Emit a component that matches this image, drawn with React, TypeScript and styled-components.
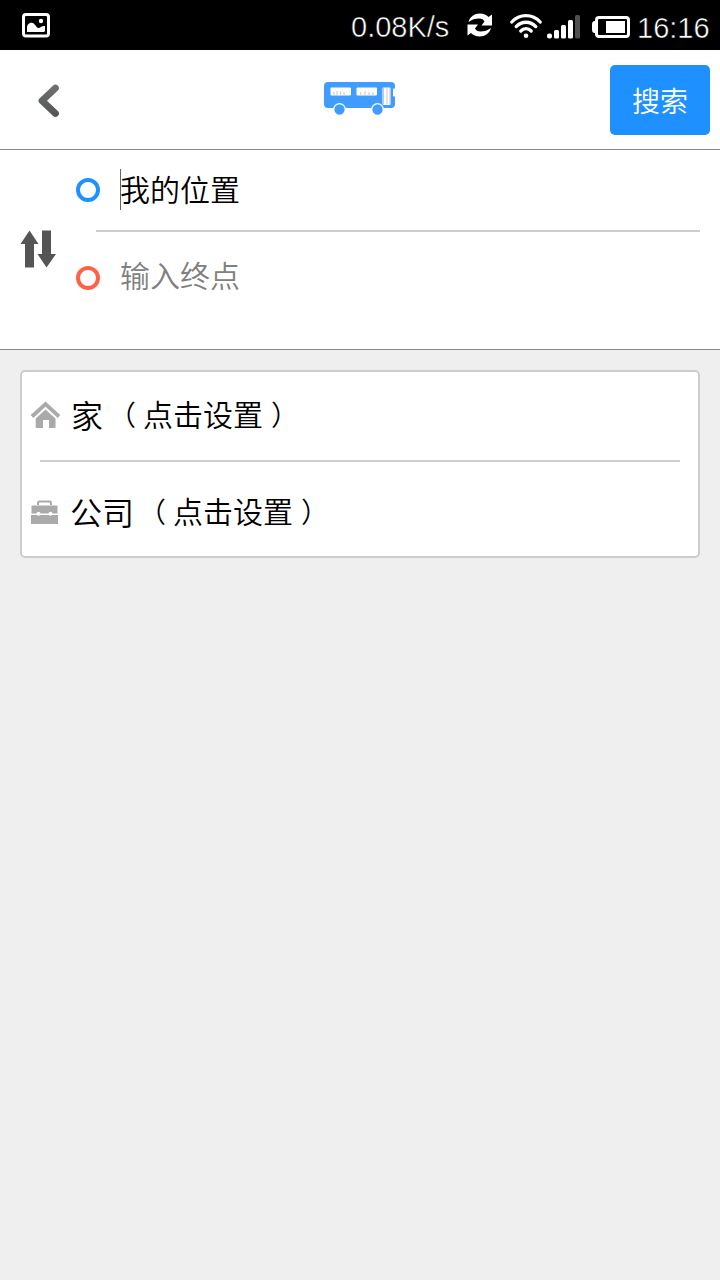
import React from "react";
import styled, { createGlobalStyle } from "styled-components";

const GlobalStyle = createGlobalStyle`
  * { box-sizing: border-box; }
  body { margin: 0; background: #efefef; }
`;

const Screen = styled.main`
  width: 720px;
  height: 1280px;
  overflow: hidden;
  background: #efefef;
  color: #000;
  font-family: "Noto Sans CJK SC", sans-serif;
  font-weight: 350;
`;

const StatusBar = styled.header`
  display: flex;
  align-items: center;
  height: 50px;
  padding: 0 12px 0 22px;
  background: #000;
  svg { flex: none; display: block; }
`;

const StatusText = styled.span<{ $width: number; $top?: number }>`
  width: ${(p) => p.$width}px;
  flex: none;
  padding-top: ${(p) => p.$top ?? 4}px;
  color: #fff;
  font: 400 29px/46px "Liberation Sans", sans-serif;
  white-space: nowrap;
  -webkit-text-stroke: 0.5px #000;
`;

const StatusRight = styled.div`
  display: flex;
  align-items: center;
  margin-left: auto;
`;

const Indicators = styled.div`
  display: flex;
  align-items: center;
  padding-top: 3px;
`;

const Gap = styled.div<{ $w: number }>`
  width: ${(p) => p.$w}px;
  flex: none;
`;

const NavBar = styled.nav`
  display: flex;
  align-items: center;
  justify-content: space-between;
  height: 100px;
  padding: 0 10px 0 36px;
  background: #fff;
  border-bottom: 1px solid #888;
`;

const PlainButton = styled.button`
  display: block;
  padding: 0;
  border: 0;
  background: none;
  svg { display: block; }
`;

const BackButton = styled(PlainButton)`
  width: 100px;
  padding-top: 2px;
`;

const BusTab = styled.div`
  width: 76px;
  margin-left: -4px;
  margin-bottom: 4px;
  svg { display: block; }
`;

const SearchButton = styled(PlainButton)`
  width: 100px;
  height: 70px;
  margin-left: 26px;
  margin-top: 1px;
  border-radius: 5px;
  background: #1e90ff;
  color: #fff;
  font: 350 28px/70px "Noto Sans CJK SC", sans-serif;
`;

const RouteForm = styled.section`
  display: flex;
  height: 200px;
  background: #fff;
  border-bottom: 1px solid #888;
`;

const SwapButton = styled(PlainButton)`
  width: 76px;
  padding: 0 0 2px 20px;
`;

const Fields = styled.div`
  flex: 1;
  padding-right: 20px;
`;

const Field = styled.div<{ $height: number }>`
  display: flex;
  align-items: center;
  height: ${(p) => p.$height}px;
`;

const Ring = styled.span<{ $color: string }>`
  width: 24px;
  height: 24px;
  margin-right: 20px;
  border: 4px solid ${(p) => p.$color};
  border-radius: 50%;
`;

const Caret = styled.span`
  width: 1px;
  height: 41px;
  margin: 0 -1px 2px 0;
  background: #666;
`;

const FieldText = styled.span<{ $muted?: boolean }>`
  margin-bottom: ${(p) => (p.$muted ? 8 : 4)}px;
  color: ${(p) => (p.$muted ? "#808080" : "#000")};
  font-size: 30px;
  line-height: 40px;
`;

const Divider = styled.div<{ $left: number; $right?: number }>`
  height: 2px;
  margin-left: ${(p) => p.$left}px;
  margin-right: ${(p) => p.$right ?? 0}px;
  background: #cdcdcd;
`;

const Card = styled.section`
  height: 188px;
  margin: 20px;
  background: #fff;
  border: 2px solid #cdcdcd;
  border-radius: 5px;
`;

const PlaceRow = styled.div<{ $height: number }>`
  display: flex;
  align-items: center;
  height: ${(p) => p.$height}px;
  padding-left: 8px;
  white-space: nowrap;
  svg { display: block; flex: none; margin: 0 10px 2px 0; }
`;

const PlaceName = styled.span<{ $gap: number }>`
  margin-right: ${(p) => p.$gap}px;
  margin-bottom: 4px;
  font-size: 32px;
  line-height: 44px;
`;

const PlaceHint = styled.span`
  margin-bottom: 5px;
  font-size: 30px;
  line-height: 44px;
`;

const Paren = styled.span<{ $shift: number }>`
  margin-left: ${(p) => p.$shift}px;
  margin-right: ${(p) => 2 - p.$shift}px;
  font-size: 28px;
`;

const PictureIcon = () => (
  <svg width="28" height="25" viewBox="0 0 28 25">
    <rect x="1.500" y="1.500" width="25" height="21.500" rx="2.500" fill="none" stroke="#fff" strokeWidth="3" />
    <path d="M5 19v-4.500C5 12 7 9.800 9.500 9.800c3.500 0 4.500 5.200 7 5.200 2 0 3-2.500 6.500-2V17.500Q23 19 21.500 19z" fill="#fff" />
    <circle cx="19" cy="8" r="2.200" fill="#fff" />
  </svg>
);

const SyncIcon = () => (
  <svg width="26" height="24" viewBox="0 0 26 24">
    <path d="M1.500 9C3 3.500 7.500.5 13 .5c3.500 0 6.500 1.300 8.500 3.500L25 1.500v11H14.500l3-4C16.500 6.800 15 5.500 12 5.500 8 5.500 5 6.500 1.500 9z" fill="#fff" />
    <path d="M24 15c-1.500 5.500-6 8.500-11.500 8.500-3.500 0-6.500-1.300-8.500-3.500L.5 22.500v-11H11l-3 4c1 1.700 2.500 3 5.500 3 4 0 7-1 10.500-3.500z" fill="#fff" />
  </svg>
);

const WifiIcon = () => (
  <svg width="32" height="25" viewBox="0 0 32 25" fill="none" stroke="#fff" strokeWidth="3.300" strokeLinecap="round">
    <path d="M1.800 8C9.500-.4 22.500-.4 30.200 8" />
    <path d="M6.200 12.600c5.500-5.800 14.100-5.800 19.600 0" />
    <path d="M10.800 17c3-3.100 7.400-3.100 10.400 0" />
    <circle cx="16" cy="21.800" r="2.300" fill="#fff" stroke="none" />
  </svg>
);

const SignalIcon = () => (
  <svg width="33" height="24" viewBox="0 0 33 24" fill="#fff">
    <rect x="0" y="18.500" width="5" height="5" rx="2" />
    <rect x="7" y="15" width="5" height="8.500" rx="1.500" />
    <rect x="14" y="10" width="5" height="13.500" rx="1.500" />
    <rect x="21" y="5" width="5" height="18.500" rx="1.500" />
    <rect x="28" y="0" width="5" height="23.500" rx="1.500" fill="#505050" />
  </svg>
);

const BatteryIcon = () => (
  <svg width="38" height="22" viewBox="0 0 38 22">
    <rect x="4.500" y="1.500" width="32" height="19" rx="2.500" fill="none" stroke="#fff" strokeWidth="3" />
    <path d="M4 5H2Q0 5.500 0 8v6q0 2.500 2 3h2z" fill="#fff" />
    <rect x="14" y="5" width="19" height="12" fill="#fff" />
  </svg>
);

const BackIcon = () => (
  <svg width="24" height="36" viewBox="0 0 24 36">
    <defs>
      <linearGradient id="back" x1="0" y1="0" x2="0" y2="1">
        <stop offset="0" stopColor="#6c6e70" />
        <stop offset="1" stopColor="#555857" />
      </linearGradient>
    </defs>
    <path d="M19.500 5 6 17.800 19.500 30.500" fill="none" stroke="url(#back)" strokeWidth="6.800" strokeLinecap="round" strokeLinejoin="round" />
  </svg>
);

const BusIcon = () => (
  <svg width="76" height="36" viewBox="0 0 76 36">
    <path d="M8 2h63q4 0 4 4v18q0 4-4 4H8q-4 0-4-4V6q0-4 4-4z" fill="#409dff" />
    <g fill="#409dff" stroke="#fff" strokeWidth="1.300">
      <circle cx="19.500" cy="29.500" r="5.800" />
      <circle cx="57.500" cy="29.500" r="5.800" />
    </g>
    <g fill="#fff">
      <rect x="10.500" y="7.500" width="20.500" height="8" rx="1" />
      <rect x="36.500" y="7.500" width="20.500" height="8" rx="1" />
      <rect x="62.500" y="7.500" width="8" height="17.500" rx="1" />
      <rect x="73" y="8.500" width="3" height="8" rx="1" />
    </g>
    <path d="M14 12v3.500M17 11v4.500M20.500 11v4.500M24 12v3.500M40.500 12v3.500M45 11v4.500M49 12v3.500M53 12v3.500" stroke="#d0d0d6" strokeWidth="1.200" />
    <path d="M63.500 8v16.500M67 8v16.500M70 8v16.500" stroke="#c3c9d2" strokeWidth="1" />
  </svg>
);

const SwapIcon = () => (
  <svg width="36" height="38" viewBox="0 0 36 38" fill="#555">
    <path d="M9.500.5 18.500 14H14v23.500H5V14H.5z" />
    <path d="M22 .5h9V24h5l-9.500 13.500L17.500 24H22z" />
  </svg>
);

const HomeIcon = () => (
  <svg width="31" height="28" viewBox="0 0 31 28">
    <path d="M2 15.500 15.500 3 29 15.500" fill="none" stroke="#aaa" strokeWidth="3.800" />
    <path d="M15.500 8.500 25.500 17.500V27h-6.500v-8h-6v8H5.700v-9.500z" fill="#aaa" />
  </svg>
);

const BriefcaseIcon = () => (
  <svg width="30" height="25" viewBox="0 0 30 25">
    <path d="M8 5V3q0-1.500 1.500-1.500h10Q21 1.500 21 3v2" fill="none" stroke="#aaa" strokeWidth="2" />
    <path d="M2 5.500h25q.5 0 .5.500V13.500h-26V6Q1.500 5.500 2 5.500zM1 15h27v9H1z" fill="#aaa" />
    <g fill="#fff">
      <circle cx="8.500" cy="13.800" r="2" />
      <circle cx="20.500" cy="13.800" r="2" />
    </g>
  </svg>
);

const SetHint = () => (
  <PlaceHint>
    <Paren $shift={-5}>（</Paren>点击设置<Paren $shift={8}>）</Paren>
  </PlaceHint>
);

export default function App() {
  return (
    <Screen>
      <GlobalStyle />
      <StatusBar>
        <PictureIcon />
        <StatusRight>
          <StatusText $width={116}>0.08K/s</StatusText>
          <SyncIcon />
          <Gap $w={17} />
          <Indicators>
            <WifiIcon />
            <Gap $w={5} />
            <SignalIcon />
            <Gap $w={12} />
            <BatteryIcon />
          </Indicators>
          <Gap $w={7} />
          <StatusText $width={71} $top={6}>16:16</StatusText>
        </StatusRight>
      </StatusBar>
      <NavBar>
        <BackButton aria-label="返回"><BackIcon /></BackButton>
        <BusTab><BusIcon /></BusTab>
        <SearchButton>搜索</SearchButton>
      </NavBar>
      <RouteForm>
        <SwapButton aria-label="交换"><SwapIcon /></SwapButton>
        <Fields>
          <Field $height={80}>
            <Ring $color="#1e90ff" />
            <Caret />
            <FieldText>我的位置</FieldText>
          </Field>
          <Divider $left={20} />
          <Field $height={92}>
            <Ring $color="#ff6347" />
            <FieldText $muted>输入终点</FieldText>
          </Field>
        </Fields>
      </RouteForm>
      <Card>
        <PlaceRow $height={88}>
          <HomeIcon />
          <PlaceName $gap={10}>家</PlaceName>
          <SetHint />
        </PlaceRow>
        <Divider $left={18} $right={18} />
        <PlaceRow $height={102}>
          <BriefcaseIcon />
          <PlaceName $gap={9}>公司</PlaceName>
          <SetHint />
        </PlaceRow>
      </Card>
    </Screen>
  );
}
